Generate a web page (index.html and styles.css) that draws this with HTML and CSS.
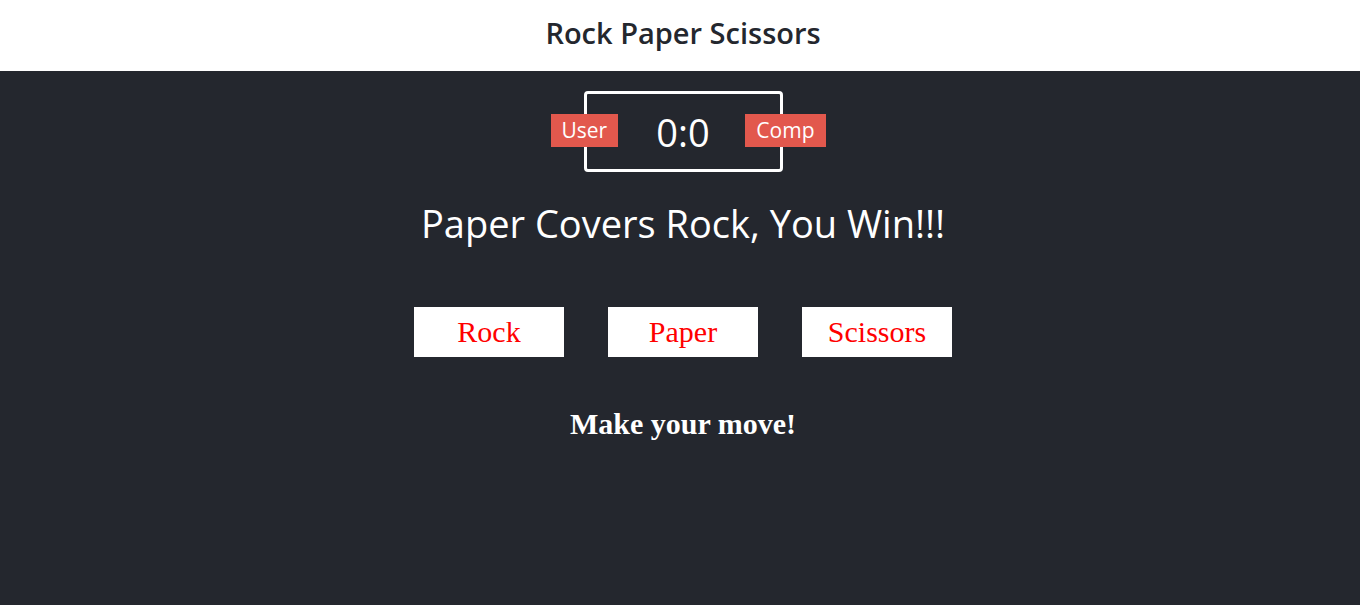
FILE: index.html
```html
<!DOCTYPE html>
<html lang="en">
<head>
    <meta charset="UTF-8">
    <meta name="viewport" content="width=device-width, initial-scale=1.0">
    <title>Rock Paper Scissors</title>
    <link rel="stylesheet" href="styles.css">
</head>
<body>

    <header>
        <h1>Rock Paper Scissors</h1>
    </header>

    <div class="score-board">
        <div id="user-label" class="badge">User</div>
        <div id="comp-label" class="badge">Comp</div>
        <span id="user-score">0</span>:<span id="comp-score">0</span>
    </div>

    <div class="result">
        <p>Paper Covers Rock, You Win!!!</p>
    </div>

    <div class="choices">
        <button class="choice" id="r">Rock</button>
        <button class="choice" id="p">Paper</button>
        <button class="choice" id="s">Scissors</button>
    </div>

    <p id="action-message">Make your move!</p>

</body>
</html>
```

FILE: styles.css
```css
* {
    margin: 0;
    padding: 0;
    box-sizing: border-box;
}

body {
    background-color: #24272e;
    font-family: 'Open Sans', sans-serif;
    padding-left: 6px;
}

header {
    background: #fff;
    height: 71px;
    margin-left: -6px;
    padding-left: 6px;
    padding-bottom: 6px;
    display: flex;
    align-items: center;
    justify-content: center;
}

header h1 {
    color: #24272e;
    font-size: 29px;
    font-weight: 600;
}

.score-board {
    margin: 20px auto 0;
    border: 3px solid #fff;
    border-radius: 4px;
    width: 199px;
    height: 81px;
    color: #fff;
    font-size: 38px;
    display: flex;
    align-items: center;
    justify-content: center;
    position: relative;
}

.badge {
    background: #e2584d;
    color: #fff;
    font-size: 21px;
    padding: 0 11px;
    height: 33px;
    line-height: 33px;
    position: absolute;
    top: 20px;
}

#user-label {
    left: -36px;
}

#comp-label {
    right: -46px;
}

.result {
    color: #fff;
    font-size: 38px;
    text-align: center;
    margin-top: 25px;
}

.choices {
    display: flex;
    justify-content: center;
    gap: 44px;
    margin-top: 58px;
}

.choice {
    width: 150px;
    height: 50px;
    background: #fff;
    border: none;
    color: red;
    font-family: 'Liberation Serif', serif;
    font-size: 30px;
}

#action-message {
    color: #fff;
    font-family: 'Liberation Serif', serif;
    font-weight: bold;
    font-size: 30px;
    text-align: center;
    margin-top: 50px;
}
```
